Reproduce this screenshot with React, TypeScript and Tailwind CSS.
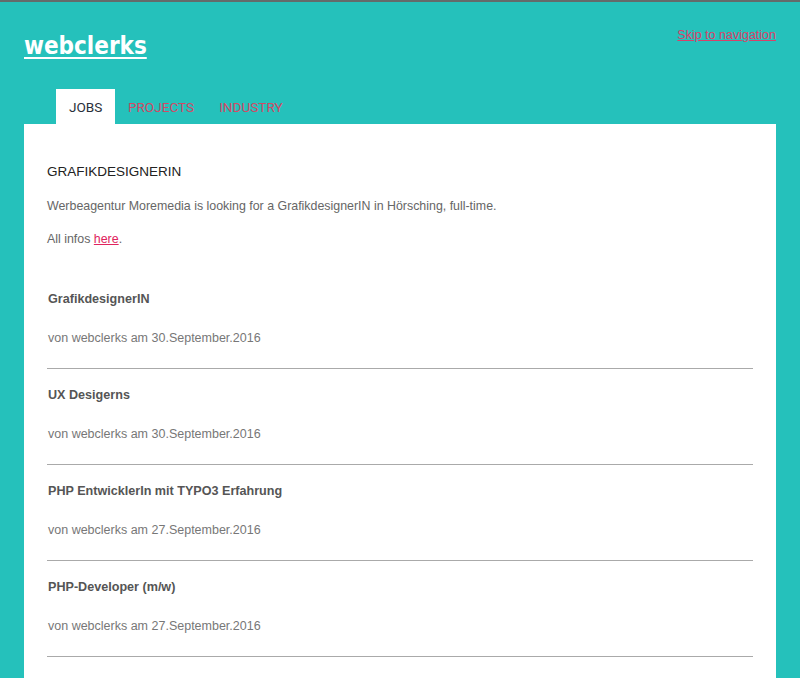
const jobs = [
  { title: 'GrafikdesignerIN', date: '30.September.2016' },
  { title: 'UX Desigerns', date: '30.September.2016' },
  { title: 'PHP EntwicklerIn mit TYPO3 Erfahrung', date: '27.September.2016' },
  { title: 'PHP-Developer (m/w)', date: '27.September.2016' },
  { title: 'Online RedakteurIn', date: '26.September.2016' },
];

const tabs = ['JOBS', 'PROJECTS', 'INDUSTRY'];

export default function App() {
  return (
    <div className="min-h-[678px] bg-[#25c1bb] border-t-2 border-[#646b6b] font-['Liberation_Sans',Arial,sans-serif]">
      <header className="flex justify-between items-start px-6 pt-[26px]">
        <a href="#" className="mt-[3px] text-white font-bold text-[24px] leading-[30px] underline decoration-2 underline-offset-[3px] font-['DejaVu_Sans_Condensed','DejaVu_Sans',Verdana,sans-serif]">
          webclerks
        </a>
        <a href="#" className="text-[12.5px] leading-[15px] text-[#d9416a] underline">
          Skip to navigation
        </a>
      </header>

      <nav className="flex pl-14 mt-[28px] font-['Roboto',sans-serif] text-[13.6px]">
        {tabs.map((t, i) => (
          <a
            key={t}
            href="#"
            className={
              i === 0
                ? 'px-[13px] pt-[2px] h-[35px] flex items-center bg-white text-[#2a2f3a]'
                : 'px-[12.5px] pt-[2px] h-[35px] flex items-center text-[#d14a66]'
            }
          >
            {t}
          </a>
        ))}
      </nav>

      <main className="mx-6 bg-white px-[23px] pt-[40px]">
        <h1 className="text-[13.5px] leading-[15px] text-[#222]">GRAFIKDESIGNERIN</h1>
        <p className="mt-[19px] text-[12.4px] leading-[16px] text-[#666]">
          Werbeagentur Moremedia is looking for a GrafikdesignerIN in Hörsching, full-time.
        </p>
        <p className="mt-[17px] text-[12.4px] leading-[16px] text-[#666]">
          All infos <a href="#" className="text-[#e0245e] underline">here</a>.
        </p>

        <ul className="mt-[45px]">
          {jobs.map((j) => (
            <li key={j.title} className="border-b border-[#aaa] pb-[22px] mb-[19px]">
              <h2 className="text-[12.6px] leading-[15px] font-bold text-[#555] pl-px">{j.title}</h2>
              <p className="mt-[23px] text-[12.5px] leading-[16px] text-[#777] pl-px">
                von webclerks am {j.date}
              </p>
            </li>
          ))}
        </ul>
      </main>
    </div>
  );
}
